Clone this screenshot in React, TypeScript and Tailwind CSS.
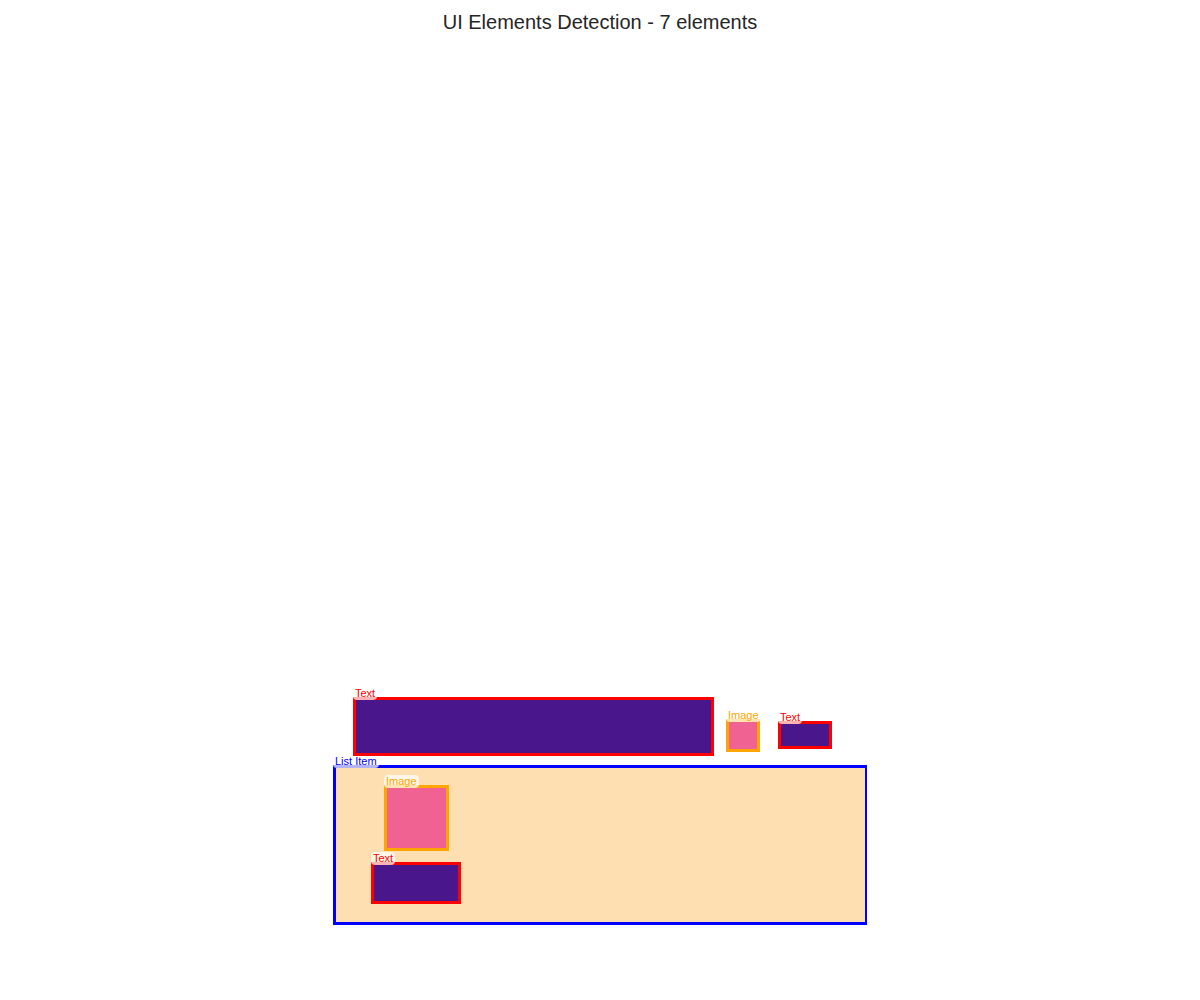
type Kind = "Text" | "Image" | "List Item";

type Detection = {
  kind: Kind;
  x: number;
  y: number;
  w: number;
  h: number;
};

// boxes in page pixels, drawn in order (list item first so children sit on top)
const detections: Detection[] = [
  { kind: "List Item", x: 333, y: 765, w: 534, h: 160 },
  { kind: "Image", x: 384, y: 785, w: 65, h: 66 },
  { kind: "Text", x: 371, y: 862, w: 90, h: 42 },
  { kind: "Text", x: 353, y: 697, w: 361, h: 59 },
  { kind: "Image", x: 726, y: 719, w: 34, h: 33 },
  { kind: "Text", x: 778, y: 721, w: 54, h: 28 },
];

const styles: Record<Kind, { box: string; label: string }> = {
  Text: {
    box: "border-[3px] border-[#ff0000] bg-[#4a168c]",
    label: "text-[#ff0000] bg-white/70",
  },
  Image: {
    box: "border-[3px] border-[#ffa500] bg-[#f06292]",
    label: "text-[#ffa500] bg-white/70",
  },
  "List Item": {
    box: "border-[3px] border-r-2 border-[#0000ff] bg-[#fedfb2]",
    label: "text-[#0000ff] bg-white/70",
  },
};

function DetectionBox({ d }: { d: Detection }) {
  const s = styles[d.kind];
  return (
    <div
      className={`absolute ${s.box}`}
      style={{ left: d.x, top: d.y, width: d.w, height: d.h }}
    >
      <span
        className={`absolute left-[-3px] bottom-full rounded-sm px-[2px] text-[11px] leading-[13px] whitespace-nowrap ${s.label}`}
      >
        {d.kind}
      </span>
    </div>
  );
}

export default function App() {
  return (
    <div className="relative w-[1200px] h-[1000px] bg-white font-['Liberation_Sans',Arial,sans-serif] overflow-hidden">
      <h1 className="pt-[9px] text-center text-[20px] leading-[26px] text-[#262626]">
        UI Elements Detection - 7 elements
      </h1>
      {detections.map((d, i) => (
        <DetectionBox key={i} d={d} />
      ))}
    </div>
  );
}
